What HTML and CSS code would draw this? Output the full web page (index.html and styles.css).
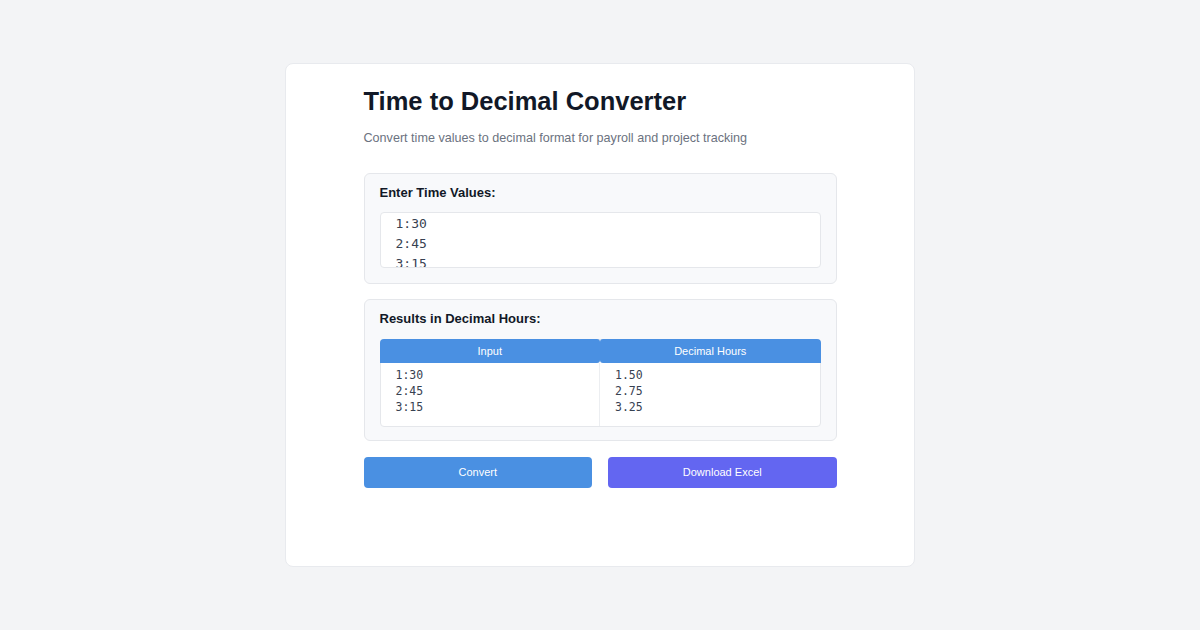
FILE: index.html
```html
<!DOCTYPE html>
<html>
<head>
<meta charset="utf-8">
<link rel="stylesheet" href="styles.css">
</head>
<body>
<div class="page">
  <div class="card">
    <div class="inner">
      <h1 class="title">Time to Decimal Converter</h1>
      <p class="subtitle">Convert time values to decimal format for payroll and project tracking</p>

      <div class="section input-section">
        <div class="label">Enter Time Values:</div>
        <div class="textarea">1:30
2:45
3:15</div>
      </div>

      <div class="section results-section">
        <div class="label">Results in Decimal Hours:</div>
        <div class="table">
          <div class="thead">
            <div class="th">Input</div>
            <div class="th">Decimal Hours</div>
          </div>
          <div class="tbody">
            <div class="td">1:30
2:45
3:15</div>
            <div class="td">1.50
2.75
3.25</div>
          </div>
        </div>
      </div>

      <div class="buttons">
        <div class="btn btn-convert">Convert</div>
        <div class="btn btn-download">Download Excel</div>
      </div>
    </div>
  </div>
</div>
</body>
</html>
```

FILE: styles.css
```css
* { box-sizing: border-box; }
html, body {
  margin: 0;
  padding: 0;
  background: #f3f4f6;
  font-family: "Liberation Sans", Arial, sans-serif;
}
.page {
  width: 1200px;
  height: 630px;
  padding-top: 63px;
  display: flex;
  justify-content: center;
  align-items: flex-start;
}
.card {
  width: 630px;
  height: 504px;
  background: #ffffff;
  border: 1px solid #e8eaee;
  border-radius: 8px;
  padding-top: 20px;
}
.inner {
  width: 473px;
  margin: 0 auto;
}
.title {
  margin: 0;
  font-size: 25.5px;
  line-height: 34px;
  font-weight: 700;
  color: #111827;
}
.subtitle {
  margin: 11px 0 0 0;
  font-size: 12.6px;
  line-height: 18px;
  color: #6b7280;
}
.section {
  background: #f8f9fb;
  border: 1px solid #e5e7eb;
  border-radius: 6px;
  padding: 10px 15px 15px 15px;
}
.input-section {
  margin-top: 26px;
  height: 111px;
}
.results-section {
  margin-top: 15px;
  height: 142px;
}
.label {
  font-size: 13px;
  line-height: 18px;
  font-weight: 700;
  color: #111827;
}
.textarea {
  margin-top: 10px;
  height: 56px;
  background: #ffffff;
  border: 1px solid #e5e7eb;
  border-radius: 4px;
  padding: 1px 15px 0 15px;
  font-family: "DejaVu Sans Mono", "Liberation Mono", monospace;
  font-size: 13px;
  line-height: 20px;
  color: #374151;
  white-space: pre;
  overflow: hidden;
}
.table {
  margin-top: 11px;
  border: 1px solid #e5e7eb;
  border-radius: 4px;
  background: #ffffff;
}
.thead {
  display: grid;
  grid-template-columns: 1fr 1fr;
  margin: -1px -1px 0 -1px;
}
.th {
  background: #4a90e2;
  color: #ffffff;
  font-size: 11px;
  line-height: 24px;
  height: 24px;
  text-align: center;
}
.th:first-child { border-radius: 4px 3px 3px 0; }
.th:last-child { border-radius: 3px 4px 0 3px; }
.tbody {
  display: grid;
  grid-template-columns: 1fr 1fr;
}
.td {
  padding: 4px 15px 11px 15px;
  font-family: "DejaVu Sans Mono", "Liberation Mono", monospace;
  font-size: 11.5px;
  line-height: 16px;
  color: #374151;
  white-space: pre;
}
.td:first-child { border-right: 1px solid #eceef1; }
.buttons {
  margin-top: 16px;
  display: grid;
  grid-template-columns: 1fr 1fr;
  column-gap: 16px;
}
.btn {
  height: 31px;
  line-height: 31px;
  text-align: center;
  font-size: 11px;
  color: #ffffff;
  border-radius: 4px;
}
.btn-convert { background: #4a90e2; }
.btn-download { background: #6366f1; }
```
